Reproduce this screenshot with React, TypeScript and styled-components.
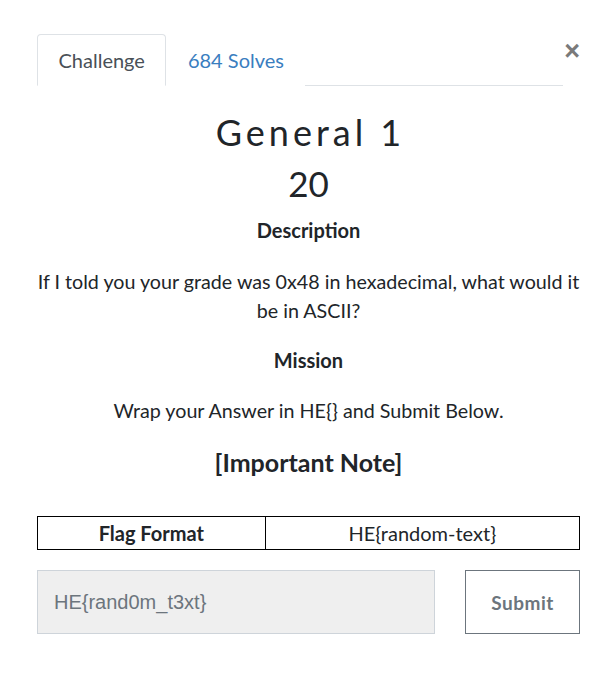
import React from "react";
import styled, { createGlobalStyle } from "styled-components";

const Global = createGlobalStyle`
  html, body { margin: 0; padding: 0; background: #fff; }
  body { font-family: Lato, "Noto Sans", sans-serif; color: #212529; }
  * { box-sizing: border-box; }
`;

const Modal = styled.div`
  padding: 34px 29px 40px 37px;
`;

const Header = styled.div`
  display: flex;
  align-items: flex-start;
`;

const Tabs = styled.div`
  flex: 1;
  display: flex;
  border-bottom: 1px solid #dee2e6;
`;

const Tab = styled.div<{ $active?: boolean }>`
  padding: 12px 20.5px;
  font-size: 20px;
  line-height: 26px;
  margin-bottom: -1px;
  border: 1px solid ${(p) => (p.$active ? "#dee2e6" : "transparent")};
  border-bottom-color: ${(p) => (p.$active ? "#fff" : "transparent")};
  border-radius: 4px 4px 0 0;
  color: ${(p) => (p.$active ? "#495057" : "#3a7ebf")};
  background: #fff;
`;

const Close = styled.button`
  width: 17px;
  margin-top: 4px;
  padding: 0;
  border: 0;
  background: none;
  font-family: "Liberation Sans", Arial, sans-serif;
  font-size: 27px;
  font-weight: 700;
  line-height: 27px;
  color: #7a7a7a;
  text-align: right;
`;

const Body = styled.div`
  display: flex;
  flex-direction: column;
  align-items: center;
  text-align: center;
`;

const Title = styled.h2`
  margin: 24px 0 0;
  font-size: 36px;
  font-weight: 400;
  letter-spacing: 4px;
  line-height: 44px;
  padding-left: 4px;
`;

const Value = styled.h3`
  margin: 8px 0 0;
  font-size: 35px;
  font-weight: 400;
  line-height: 42px;
`;

const Heading = styled.h4<{ $top: number }>`
  margin: ${(p) => p.$top}px 0 0;
  font-size: 20px;
  font-weight: 700;
  line-height: 24px;
`;

const Para = styled.p<{ $top: number }>`
  margin: ${(p) => p.$top}px 0 0;
  font-size: 19.7px;
  line-height: 29px;
`;

const Note = styled.h3`
  margin: 22px 0 0;
  font-size: 25px;
  font-weight: 700;
  line-height: 30px;
`;

const Table = styled.table`
  width: 100%;
  margin-top: 39px;
  border-collapse: collapse;
  font-size: 20px;
`;

const Cell = styled.td<{ $bold?: boolean }>`
  border: 1px solid #000;
  padding: 0;
  height: 33px;
  line-height: 31px;
  font-weight: ${(p) => (p.$bold ? 700 : 400)};
  width: ${(p) => (p.$bold ? "42%" : "auto")};
`;

const Form = styled.div`
  display: flex;
  gap: 30px;
  margin-top: 20px;
  width: 100%;
`;

const Input = styled.input`
  flex: 1;
  height: 64px;
  padding: 0 16px;
  border: 1px solid #ced4da;
  background: #efefef;
  font-family: "Liberation Sans", Arial, sans-serif;
  font-size: 20px;
  color: #495057;
  outline: none;
  &::placeholder { color: #6c757d; }
`;

const Submit = styled.button`
  width: 115px;
  height: 64px;
  border: 1px solid #6c757d;
  background: #fff;
  color: #6c757d;
  font-family: Lato, sans-serif;
  font-size: 19px;
  font-weight: 700;
  letter-spacing: 0.5px;
`;

export default function App() {
  return (
    <>
      <Global />
      <Modal>
        <Header>
          <Tabs>
            <Tab $active>Challenge</Tab>
            <Tab>684 Solves</Tab>
          </Tabs>
          <Close aria-label="Close">×</Close>
        </Header>
        <Body>
          <Title>General 1</Title>
          <Value>20</Value>
          <Heading $top={14}>Description</Heading>
          <Para $top={25}>If I told you your grade was 0x48 in hexadecimal, what would it be in ASCII?</Para>
          <Heading $top={23}>Mission</Heading>
          <Para $top={24}>Wrap your Answer in HE{"{}"} and Submit Below.</Para>
          <Note>[Important Note]</Note>
          <Table>
            <tbody>
              <tr>
                <Cell $bold>Flag Format</Cell>
                <Cell>HE{"{random-text}"}</Cell>
              </tr>
            </tbody>
          </Table>
          <Form>
            <Input placeholder="HE{rand0m_t3xt}" />
            <Submit>Submit</Submit>
          </Form>
        </Body>
      </Modal>
    </>
  );
}
